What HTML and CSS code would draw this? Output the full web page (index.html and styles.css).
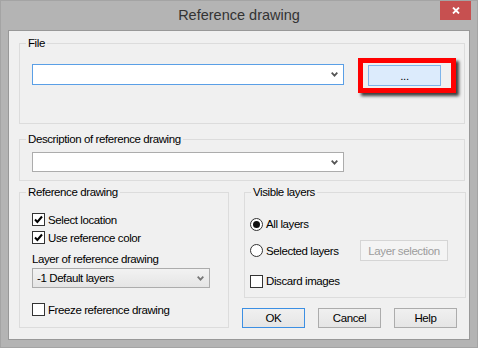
FILE: index.html
```html
<!DOCTYPE html>
<html lang="en">
<head>
    <meta charset="UTF-8">
    <title>Reference drawing</title>
    <link rel="stylesheet" href="styles.css">
</head>
<body>
    <div class="window">
        <div class="titlebar">
            <span></span>
            <div class="title">Reference drawing</div>
            <div class="close">
                <svg width="8" height="7" viewBox="0 0 8 7"><path d="M1 0.5 L7 6.5 M7 0.5 L1 6.5" stroke="#fff" stroke-width="1.8" fill="none"/></svg>
            </div>
        </div>

        <div class="client">
            <!-- File -->
            <fieldset class="group group-file">
                <legend>File</legend>
                <div class="file-row">
                    <div class="combo combo-focus">
                        <span></span>
                        <svg class="chevron" width="7" height="5" viewBox="0 0 7 5"><path d="M0.7 0.7 L3.5 3.6 L6.3 0.7" stroke="#555" stroke-width="1.8" fill="none"/></svg>
                    </div>
                    <div class="highlight">
                        <div class="btn btn-browse">...</div>
                    </div>
                </div>
            </fieldset>

            <!-- Description -->
            <fieldset class="group group-desc">
                <legend>Description of reference drawing</legend>
                <div class="group-body">
                    <div class="combo">
                        <span></span>
                        <svg class="chevron" width="7" height="5" viewBox="0 0 7 5"><path d="M0.7 0.7 L3.5 3.6 L6.3 0.7" stroke="#555" stroke-width="1.8" fill="none"/></svg>
                    </div>
                </div>
            </fieldset>

            <div class="lower">
                <fieldset class="group group-ref">
                    <legend>Reference drawing</legend>
                    <div class="group-body">
                        <div class="check-row">
                            <span class="checkbox checked"><svg width="11" height="11" viewBox="0 0 11 11"><path d="M2 5.5 L4.4 8 L9 2.5" stroke="#000" stroke-width="2" fill="none"/></svg></span>
                            <span>Select location</span>
                        </div>
                        <div class="check-row">
                            <span class="checkbox checked"><svg width="11" height="11" viewBox="0 0 11 11"><path d="M2 5.5 L4.4 8 L9 2.5" stroke="#000" stroke-width="2" fill="none"/></svg></span>
                            <span>Use reference color</span>
                        </div>
                        <div class="field-label">Layer of reference drawing</div>
                        <div class="dropdown">
                            <span>-1 Default layers</span>
                            <svg class="chevron" width="7" height="5" viewBox="0 0 7 5"><path d="M0.7 0.7 L3.5 3.6 L6.3 0.7" stroke="#777" stroke-width="1.8" fill="none"/></svg>
                        </div>
                        <div class="check-row check-freeze">
                            <span class="checkbox"></span>
                            <span>Freeze reference drawing</span>
                        </div>
                    </div>
                </fieldset>

                <div class="right-col">
                    <fieldset class="group group-layers">
                        <legend>Visible layers</legend>
                        <div class="group-body">
                            <div class="radio-row">
                                <span class="radio selected"></span>
                                <span>All layers</span>
                            </div>
                            <div class="radio-row radio-second">
                                <span class="radio"></span>
                                <span>Selected layers</span>
                                <div class="btn btn-disabled">Layer selection</div>
                            </div>
                            <div class="check-row check-discard">
                                <span class="checkbox"></span>
                                <span>Discard images</span>
                            </div>
                        </div>
                    </fieldset>

                    <div class="buttons">
                        <div class="btn btn-action btn-default">OK</div>
                        <div class="btn btn-action">Cancel</div>
                        <div class="btn btn-action">Help</div>
                    </div>
                </div>
            </div>
        </div>
    </div>
</body>
</html>
```

FILE: styles.css
```css
body {
    margin: 0;
    font-family: "Liberation Sans", Arial, sans-serif;
    font-size: 11.5px;
    letter-spacing: -0.4px;
    color: #000;
}

.window {
    width: 478px;
    height: 348px;
    box-sizing: border-box;
    background-color: #b4b4b4;
    border: 1px solid #a4a4a4;
}

.titlebar {
    height: 29px;
    display: grid;
    grid-template-columns: 1fr auto 1fr;
}

.title {
    font-size: 14.5px;
    letter-spacing: 0;
    color: #333;
    line-height: 29px;
}

.close {
    justify-self: end;
    width: 31px;
    height: 19px;
    margin-right: 6px;
    background-color: #c75050;
    display: flex;
    justify-content: center;
    align-items: center;
}

.client {
    height: 310px;
    box-sizing: border-box;
    margin: 0 7px;
    border: 1px solid #989898;
    background-color: #f0f0f0;
    padding: 5px 4px 0 10px;
}

/* group boxes */
.group {
    margin: 0;
    padding: 0;
    min-width: 0;
    border: 1px solid #dcdcdc;
}

.group legend {
    margin-left: 6px;
    padding: 0 2px;
    line-height: 14px;
}

.file-row {
    display: flex;
    align-items: flex-start;
    padding: 8px 0 30px 12px;
}

.combo {
    width: 312px;
    height: 20px;
    box-sizing: border-box;
    background-color: #fff;
    border: 1px solid #acacac;
    display: flex;
    justify-content: space-between;
    align-items: center;
    padding: 0 5px 0 4px;
}

.combo-focus {
    height: 21px;
    margin-top: 6px;
    border-color: #5a9fe6;
}

.highlight {
    margin-left: 14px;
    width: 98px;
    height: 35px;
    box-sizing: border-box;
    border: 5px solid #ff0000;
    box-shadow: 3px 3px 3px rgba(0, 0, 0, 0.75);
    padding: 2px 0 0 5px;
}

.btn {
    box-sizing: border-box;
    border: 1px solid #acacac;
    background: linear-gradient(#f0f0f0, #e5e5e5);
    display: flex;
    justify-content: center;
    align-items: center;
}

.btn-browse {
    width: 73px;
    height: 21px;
    background: #dcebfc;
    border-color: #7eb4ea;
    padding-top: 1px;
}

.group-desc {
    margin-top: 8px;
}

.group-desc .group-body {
    padding: 6px 0 8px 12px;
}

/* lower part */
.lower {
    margin-top: 4px;
    display: grid;
    grid-template-columns: 210px 222px;
    column-gap: 15px;
}

.group-ref .group-body {
    padding: 14px 0 10px 12px;
}

.check-row,
.radio-row {
    display: flex;
    align-items: center;
    height: 13px;
    gap: 3px;
}

.check-row + .check-row {
    margin-top: 5px;
}

.checkbox {
    width: 13px;
    height: 13px;
    box-sizing: border-box;
    border: 1px solid #333;
    background-color: #fff;
    display: flex;
    justify-content: center;
    align-items: center;
}

.field-label {
    margin-top: 8px;
    line-height: 14px;
}

.dropdown {
    margin-top: 2px;
    width: 178px;
    height: 20px;
    box-sizing: border-box;
    border: 1px solid #acacac;
    background: linear-gradient(#f2f2f2, #e5e5e5);
    display: flex;
    justify-content: space-between;
    align-items: center;
    padding: 0 5px 0 4px;
}

.check-row.check-freeze {
    margin-top: 15px;
}

.right-col {
    display: flex;
    flex-direction: column;
}

.group-layers .group-body {
    padding: 17px 0 8px 5px;
}

.radio-row {
    height: 16px;
}

.radio-second {
    height: 21px;
    margin-top: 8px;
}

.radio {
    width: 13px;
    height: 13px;
    box-sizing: border-box;
    border: 1px solid #333;
    border-radius: 50%;
    background-color: #fff;
    display: flex;
    justify-content: center;
    align-items: center;
}

.radio.selected::after {
    content: "";
    width: 7px;
    height: 7px;
    border-radius: 50%;
    background-color: #111;
}

.btn-disabled {
    margin-left: auto;
    margin-right: 17px;
    width: 88px;
    height: 21px;
    background: #f4f4f4;
    border-color: #d5d5d5;
    color: #9d9d9d;
}

.check-row.check-discard {
    height: 16px;
    margin-top: 12px;
}

.buttons {
    display: flex;
    gap: 13px;
    margin: 10px 0 0 -2px;
}

.btn-action {
    width: 63px;
    height: 20px;
}

.btn-default {
    border-color: #3c8fe3;
}
```
